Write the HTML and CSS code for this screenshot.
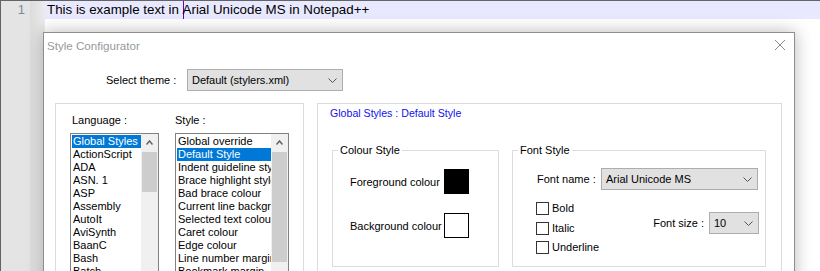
FILE: index.html
```html
<!DOCTYPE html>
<html lang="en">
<head>
    <meta charset="UTF-8">
    <meta name="viewport" content="width=device-width, initial-scale=1.0">
    <title>Style Configurator</title>
    <link rel="stylesheet" href="styles.css">
</head>

<body>
    <div class="editor">
        <div class="gutter"><span class="line-no">1</span></div>
        <div class="fold-margin"></div>
        <div class="text-area">
            <div class="current-line">This is example text in <span class="caret"></span>Arial Unicode MS in Notepad++</div>
        </div>
    </div>

    <div class="dialog">
        <div class="title-bar">
            <span class="title">Style Configurator</span>
            <svg class="close" width="10" height="10" viewBox="0 0 10 10">
                <path d="M0 0 L10 10 M10 0 L0 10" />
            </svg>
        </div>

        <div class="theme-row">
            <span class="theme-label">Select theme :</span>
            <div class="combo theme-combo">
                <span>Default (stylers.xml)</span>
                <svg class="chevron" width="9" height="5" viewBox="0 0 9 5"><polyline points="0.5,0.5 4.5,4.5 8.5,0.5" /></svg>
            </div>
        </div>

        <div class="panels">
            <div class="group list-group">
                <div class="list-col lang-col">
                    <div class="list-label">Language :</div>
                    <div class="listbox">
                        <ul class="items">
                            <li class="selected">Global Styles</li>
                            <li>ActionScript</li>
                            <li>ADA</li>
                            <li>ASN. 1</li>
                            <li>ASP</li>
                            <li>Assembly</li>
                            <li>AutoIt</li>
                            <li>AviSynth</li>
                            <li>BaanC</li>
                            <li>Bash</li>
                            <li>Batch</li>
                        </ul>
                        <div class="scrollbar">
                            <div class="arrow">
                                <svg width="7" height="5" viewBox="0 0 7 5"><polyline points="0.5,4.5 3.5,1 6.5,4.5" /></svg>
                            </div>
                            <div class="thumb lang-thumb"></div>
                        </div>
                    </div>
                </div>

                <div class="list-col style-col">
                    <div class="list-label">Style :</div>
                    <div class="listbox">
                        <ul class="items">
                            <li>Global override</li>
                            <li class="selected">Default Style</li>
                            <li>Indent guideline style</li>
                            <li>Brace highlight style</li>
                            <li>Bad brace colour</li>
                            <li>Current line background colour</li>
                            <li>Selected text colour</li>
                            <li>Caret colour</li>
                            <li>Edge colour</li>
                            <li>Line number margin</li>
                            <li>Bookmark margin</li>
                        </ul>
                        <div class="scrollbar">
                            <div class="arrow">
                                <svg width="7" height="5" viewBox="0 0 7 5"><polyline points="0.5,4.5 3.5,1 6.5,4.5" /></svg>
                            </div>
                            <div class="thumb style-thumb"></div>
                        </div>
                    </div>
                </div>
            </div>

            <div class="group detail-group">
                <div class="detail-title">Global Styles : Default Style</div>
                <div class="sub-groups">
                    <fieldset class="colour-style">
                        <legend>Colour Style</legend>
                        <div class="colour-row">
                            <span class="colour-label">Foreground colour</span>
                            <span class="swatch fg"></span>
                        </div>
                        <div class="colour-row">
                            <span class="colour-label">Background colour</span>
                            <span class="swatch bg"></span>
                        </div>
                    </fieldset>

                    <fieldset class="font-style">
                        <legend>Font Style</legend>
                        <div class="font-row">
                            <span class="font-label">Font name :</span>
                            <div class="combo font-combo">
                                <span>Arial Unicode MS</span>
                                <svg class="chevron" width="9" height="5" viewBox="0 0 9 5"><polyline points="0.5,0.5 4.5,4.5 8.5,0.5" /></svg>
                            </div>
                        </div>
                        <div class="font-options">
                            <div class="checks">
                                <label class="check"><span class="box"></span>Bold</label>
                                <label class="check"><span class="box"></span>Italic</label>
                                <label class="check"><span class="box"></span>Underline</label>
                            </div>
                            <div class="size-row">
                                <span class="size-label">Font size :</span>
                                <div class="combo size-combo">
                                    <span>10</span>
                                    <svg class="chevron" width="9" height="5" viewBox="0 0 9 5"><polyline points="0.5,0.5 4.5,4.5 8.5,0.5" /></svg>
                                </div>
                            </div>
                        </div>
                    </fieldset>
                </div>
            </div>
        </div>
    </div>
</body>

</html>
```

FILE: styles.css
```css
body {
    margin: 0;
    width: 820px;
    height: 271px;
    overflow: hidden;
    position: relative;
    background-color: #fff;
    font-family: "Liberation Sans", Arial, sans-serif;
    font-size: 11px;
    color: #000;
}

/* editor behind the dialog */
.editor {
    display: flex;
    height: 271px;
    box-sizing: border-box;
    border-top: 1px solid #646464;
    border-left: 1px solid #646464;
}

.gutter {
    width: 29px;
    background-color: #e4e4e4;
    text-align: right;
}

.line-no {
    display: block;
    padding-right: 5px;
    font-size: 13px;
    line-height: 18px;
    color: #808898;
}

.fold-margin {
    width: 15px;
    background: linear-gradient(to right, #dcdcdc, #e6e6e6 70%, #ececec);
}

.text-area {
    flex: 1;
}

.current-line {
    height: 18px;
    padding-left: 2px;
    background-color: #e8e8ff;
    font-size: 13.33px;
    line-height: 18px;
    white-space: nowrap;
}

.caret {
    display: inline-block;
    width: 1px;
    height: 18px;
    margin-right: -1px;
    vertical-align: top;
    background-color: #6000c0;
}

/* dialog window */
.dialog {
    position: absolute;
    left: 43px;
    top: 32px;
    width: 752px;
    height: 260px;
    box-sizing: border-box;
    background-color: #fff;
    border: 1px solid #8e8e8e;
    box-shadow: 0 0 16px rgba(0, 0, 0, 0.28);
}

.title-bar {
    display: flex;
    align-items: center;
    justify-content: space-between;
    height: 24px;
    padding: 0 9px 0 3px;
}

.title {
    font-size: 11.6px;
    color: #999;
}

.close {
    stroke: #8a8a8a;
    stroke-width: 1;
    fill: none;
}

.theme-row {
    display: flex;
    align-items: center;
    margin-top: 12px;
    padding-left: 62px;
}

.theme-label {
    width: 81px;
}

.combo {
    display: flex;
    align-items: center;
    justify-content: space-between;
    height: 22px;
    box-sizing: border-box;
    padding: 0 5px 0 4px;
    background-color: #e1e1e1;
    border: 1px solid #adadad;
}

.chevron {
    stroke: #555;
    stroke-width: 1;
    fill: none;
}

.theme-combo {
    width: 156px;
}

.panels {
    display: flex;
    gap: 13px;
    margin-top: 12px;
    padding-left: 11px;
}

.group {
    height: 180px;
    box-sizing: border-box;
    border: 1px solid #dcdcdc;
}

/* language / style lists */
.list-group {
    display: flex;
    gap: 16px;
    width: 249px;
    padding: 10px 0 0 14px;
}

.list-label {
    line-height: 13px;
    margin-bottom: 6px;
}

.lang-col .list-label {
    margin-left: 2px;
}

.lang-col {
    width: 89px;
}

.style-col {
    width: 114px;
}

.listbox {
    display: flex;
    height: 160px;
    border: 1px solid #828282;
}

.items {
    flex: 1;
    min-width: 0;
    margin: 0;
    padding: 1px 0 0 1px;
    list-style: none;
    overflow: hidden;
}

.items li {
    height: 13px;
    padding-left: 1px;
    line-height: 13px;
    white-space: nowrap;
    overflow: hidden;
}

.items li.selected {
    background-color: #0078d7;
    color: #fff;
}

.scrollbar {
    width: 17px;
    background-color: #f0f0f0;
}

.arrow {
    display: flex;
    align-items: center;
    justify-content: center;
    height: 17px;
}

.arrow svg {
    stroke: #606060;
    stroke-width: 1.5;
    fill: none;
}

.thumb {
    margin: 1px 1px 0;
    background-color: #cdcdcd;
}

.lang-thumb {
    height: 40px;
}

.style-thumb {
    height: 110px;
}

/* style details */
.detail-group {
    width: 465px;
    padding: 3px 0 0 14px;
}

.detail-title {
    margin-left: -2px;
    font-size: 10.6px;
    line-height: 13px;
    color: #1010f0;
}

.sub-groups {
    display: flex;
    gap: 13px;
    margin-top: 24px;
}

fieldset {
    margin: 0;
    padding: 0;
    min-width: 0;
    box-sizing: border-box;
    height: 123px;
    border: 1px solid #dcdcdc;
}

legend {
    margin-left: 5px;
    padding: 0 2px;
    line-height: 13px;
}

.colour-style {
    width: 167px;
}

.colour-row {
    display: flex;
    align-items: center;
    height: 25px;
    margin: 12px 0 0 17px;
}

.colour-row + .colour-row {
    margin-top: 19px;
}

.colour-label {
    width: 94px;
}

.swatch {
    width: 25px;
    height: 25px;
    box-sizing: border-box;
    border: 1px solid #000;
}

.swatch.fg {
    background-color: #000;
}

.swatch.bg {
    background-color: #fff;
}

.font-style {
    width: 254px;
}

.font-row {
    display: flex;
    align-items: center;
    margin: 11px 6px 0 24px;
}

.font-label {
    width: 64px;
}

.font-combo {
    width: 157px;
}

.font-options {
    display: flex;
    justify-content: space-between;
    margin: 12px 6px 0 23px;
}

.checks {
    display: flex;
    flex-direction: column;
    gap: 6.5px;
}

.check {
    display: flex;
    align-items: center;
    height: 13px;
    line-height: 13px;
}

.box {
    width: 13px;
    height: 13px;
    box-sizing: border-box;
    margin-right: 3px;
    border: 1px solid #333;
    background-color: #fff;
}

.size-row {
    display: flex;
    align-items: center;
    margin-top: 10px;
    align-self: flex-start;
}

.size-label {
    margin-right: 5px;
}

.size-combo {
    width: 50px;
}
```
